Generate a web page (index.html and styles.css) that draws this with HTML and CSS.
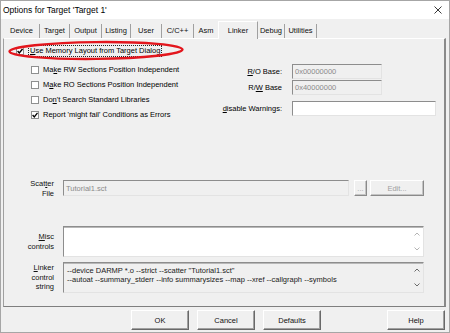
FILE: index.html
```html
<!DOCTYPE html>
<html lang="en">
<head>
  <meta charset="UTF-8" />
  <title>Options for Target 'Target 1'</title>
  <link rel="stylesheet" href="styles.css">
</head>
<body>
  <div class="dialog">
    <div class="title-bar">
      <span class="title">Options for Target 'Target 1'</span>
      <svg class="close" width="8" height="8" viewBox="0 0 8 8"><path d="M0.5 0.5L7.5 7.5M7.5 0.5L0.5 7.5" stroke="#222" stroke-width="0.9" fill="none"/></svg>
    </div>

    <div class="tabs">
      <div class="tab tab-device">Device</div>
      <div class="tab tab-target">Target</div>
      <div class="tab tab-output">Output</div>
      <div class="tab tab-listing">Listing</div>
      <div class="tab tab-user">User</div>
      <div class="tab tab-cpp">C/C++</div>
      <div class="tab tab-asm">Asm</div>
      <div class="tab tab-linker selected">Linker</div>
      <div class="tab tab-debug">Debug</div>
      <div class="tab tab-utilities">Utilities</div>
    </div>

    <div class="panel">
      <div class="check-row first">
        <span class="checkbox"><svg viewBox="0 0 6 6"><path d="M0.6 3L2.3 4.9L5.5 0.9" stroke="#000" stroke-width="1.4" fill="none"/></svg></span>
        <span class="focus-label"><u>U</u>se Memory Layout from Target Dialog</span>
      </div>

      <div class="options">
        <div class="check-list">
          <div class="check-row">
            <span class="checkbox"></span>
            <span>Ma<u>k</u>e RW Sections Position Independent</span>
          </div>
          <div class="check-row">
            <span class="checkbox"></span>
            <span>M<u>a</u>ke RO Sections Position Independent</span>
          </div>
          <div class="check-row">
            <span class="checkbox"></span>
            <span>Do<u>n</u>'t Search Standard Libraries</span>
          </div>
          <div class="check-row">
            <span class="checkbox"><svg viewBox="0 0 6 6"><path d="M0.6 3L2.3 4.9L5.5 0.9" stroke="#000" stroke-width="1.3" fill="none"/></svg></span>
            <span>Report 'might fail' Conditions as Errors</span>
          </div>
        </div>

        <div class="fields">
          <div class="field ro">
            <span class="field-label"><u>R</u>/O Base:</span>
            <div class="text-field disabled short">0x00000000</div>
          </div>
          <div class="field rw">
            <span class="field-label">R/<u>W</u> Base</span>
            <div class="text-field disabled short">0x40000000</div>
          </div>
          <div class="field warn">
            <span class="field-label"><u>d</u>isable Warnings:</span>
            <div class="text-field long"></div>
          </div>
        </div>
      </div>

      <div class="form-row scatter">
        <div class="row-label top">Scat<u>t</u>er<br>File</div>
        <div class="text-field disabled scatter-file">Tutorial1.sct</div>
        <div class="small-btn dots">...</div>
        <div class="small-btn edit">Edit...</div>
      </div>

      <div class="form-row misc">
        <div class="row-label"><u>M</u>isc<br>controls</div>
        <div class="text-box">
          <div class="box-text"></div>
          <div class="scroll faded">
            <svg width="6" height="4" viewBox="0 0 6 4"><path d="M0.5 3.5L3 1L5.5 3.5" stroke="currentColor" fill="none"/></svg>
            <svg width="6" height="4" viewBox="0 0 6 4"><path d="M0.5 0.5L3 3L5.5 0.5" stroke="currentColor" fill="none"/></svg>
          </div>
        </div>
      </div>

      <div class="form-row linker">
        <div class="row-label"><u>L</u>inker<br>control<br>string</div>
        <div class="text-box readonly">
          <div class="box-text">--device DARMP *.o --strict --scatter "Tutorial1.sct"<br>--autoat --summary_stderr --info summarysizes --map --xref --callgraph --symbols</div>
          <div class="scroll">
            <svg width="6" height="4" viewBox="0 0 6 4"><path d="M0.5 3.5L3 1L5.5 3.5" stroke="currentColor" fill="none"/></svg>
            <svg width="6" height="4" viewBox="0 0 6 4"><path d="M0.5 0.5L3 3L5.5 0.5" stroke="currentColor" fill="none"/></svg>
          </div>
        </div>
      </div>

      <svg class="highlight" width="180" height="22" viewBox="0 0 180 22">
        <ellipse cx="89" cy="10.5" rx="86.5" ry="8.4" fill="none" stroke="#e3161d" stroke-width="2.4" transform="rotate(-0.6 89 10.5)"/>
      </svg>
    </div>

    <div class="button-row">
      <div class="btn">OK</div>
      <div class="btn">Cancel</div>
      <div class="btn">Defaults</div>
      <div class="btn help">Help</div>
    </div>
  </div>
</body>
</html>
```

FILE: styles.css
```css
* {
  box-sizing: border-box;
}

body {
  margin: 0;
  font-family: "Liberation Sans", Arial, sans-serif;
  font-size: 7.5px;
  color: #000;
  background-color: #f0f0f0;
}

.dialog {
  width: 450px;
  height: 333px;
  border: 1px solid #a6a6a6;
  background-color: #f0f0f0;
  display: flex;
  flex-direction: column;
  overflow: hidden;
}

.title-bar {
  height: 18px;
  flex-shrink: 0;
  background-color: #fff;
  display: flex;
  align-items: center;
  justify-content: space-between;
  padding: 0 7px 0 2px;
}

.title {
  font-size: 8.5px;
}

/* tab strip */
.tabs {
  height: 19px;
  flex-shrink: 0;
  display: flex;
  align-items: flex-end;
  padding-left: 3px;
}

.tab {
  height: 14px;
  line-height: 14px;
  text-align: center;
  border-right: 1px solid #a0a0a0;
  color: #111;
}

.tab-device { width: 36px; }
.tab-target { width: 30px; }
.tab-output { width: 32px; }
.tab-listing { width: 29px; }
.tab-user { width: 31px; }
.tab-cpp { width: 32px; }
.tab-asm { width: 24px; border-right: none; }
.tab-linker { width: 40px; }
.tab-debug { width: 27px; }
.tab-utilities { width: 32px; }

.tab.selected {
  position: relative;
  z-index: 1;
  height: 18px;
  line-height: 17px;
  margin-bottom: -1px;
  background-color: #f0f0f0;
  border-left: 1px solid #fff;
  border-top: 1px solid #fff;
}

/* tab page */
.panel {
  position: relative;
  height: 269px;
  flex-shrink: 0;
  margin: 0 3px 0 2px;
  padding: 4px 20px 0 0;
  border-top: 1px solid #fff;
  border-left: 1px solid #a0a0a0;
  border-right: 2px solid #8a8a8a;
  border-bottom: 1px solid #7f7f7f;
}

.check-row {
  height: 15px;
  display: flex;
  align-items: center;
  gap: 4px;
  white-space: nowrap;
}

.check-row.first {
  padding-left: 12px;
}

.checkbox {
  width: 8px;
  height: 8px;
  flex-shrink: 0;
  border: 1px solid #8e8f8f;
  background-color: #fff;
  display: flex;
  align-items: center;
  justify-content: center;
}

.checkbox svg {
  width: 6px;
  height: 6px;
}

.focus-label {
  line-height: 10px;
  padding: 0 1px;
  border: 1px dotted #222;
}

.options {
  display: flex;
  margin-top: 4px;
}

.check-list {
  width: 216px;
  flex-shrink: 0;
  padding-left: 27px;
}

.fields {
  flex-shrink: 0;
}

.field {
  display: flex;
  align-items: center;
  height: 15px;
}

.field.ro { margin-top: 2px; }
.field.rw { margin-top: 1px; }
.field.warn { margin-top: 6px; }

.field-label {
  width: 62px;
  flex-shrink: 0;
  margin-right: 10px;
  text-align: right;
  white-space: nowrap;
}

.text-field {
  height: 15px;
  flex-shrink: 0;
  display: flex;
  align-items: center;
  padding: 0 2px;
  background-color: #fff;
  border: 1px solid;
  border-color: #8d8d8d #e3e3e3 #e3e3e3 #8d8d8d;
}

.text-field.disabled {
  background-color: #f0f0f0;
  color: #8a8a8a;
}

.text-field.short { width: 90px; }
.text-field.long { width: 144px; }

.form-row {
  display: flex;
  align-items: center;
}

.form-row.scatter { margin-top: 55px; }
.form-row.misc { margin-top: 27px; }
.form-row.linker { margin-top: 5px; }

.row-label {
  width: 59px;
  flex-shrink: 0;
  padding-right: 9px;
  text-align: right;
  line-height: 9.5px;
  color: #111;
}

.row-label.top {
  align-self: flex-start;
  padding-top: 2px;
  line-height: 10px;
}

.text-field.scatter-file {
  width: 286px;
  height: 16px;
}

.small-btn {
  height: 16px;
  display: flex;
  align-items: center;
  justify-content: center;
  color: #a0a0a0;
  border: 1px solid;
  border-color: #fff #8a8a8a #8a8a8a #fff;
  box-shadow: inset -1px -1px 0 #c4c4c4;
}

.small-btn.dots {
  width: 13px;
  margin-left: 5px;
}

.small-btn.edit {
  width: 54px;
  margin-left: 3px;
}

.text-box {
  flex: 1;
  height: 31px;
  display: flex;
  background-color: #fff;
  border: 1px solid;
  border-color: #8d8d8d #e3e3e3 #e3e3e3 #8d8d8d;
  box-shadow: inset 0 1px 0 #b8b8b8;
}

.text-box.readonly {
  background-color: #f0f0f0;
}

.box-text {
  flex: 1;
  padding: 3px 3px 0;
  line-height: 9px;
  white-space: nowrap;
  overflow: hidden;
  color: #1a1a1a;
}

.scroll {
  width: 13px;
  display: flex;
  flex-direction: column;
  justify-content: space-between;
  align-items: center;
  padding: 5px 0;
  color: #6a6a6a;
}

.scroll.faded {
  color: #b4b4b4;
}

.highlight {
  position: absolute;
  left: 3px;
  top: 1px;
  pointer-events: none;
}

/* dialog buttons */
.button-row {
  height: 20px;
  flex-shrink: 0;
  margin-top: 3px;
  display: flex;
  gap: 8px;
  padding: 0 4px 0 130px;
}

.btn {
  width: 58px;
  height: 20px;
  display: flex;
  align-items: center;
  justify-content: center;
  border: 1px solid;
  border-color: #fff #696969 #696969 #fff;
  box-shadow: inset -1px -1px 0 #a0a0a0;
  color: #111;
}

.btn.help {
  margin-left: auto;
}
```
